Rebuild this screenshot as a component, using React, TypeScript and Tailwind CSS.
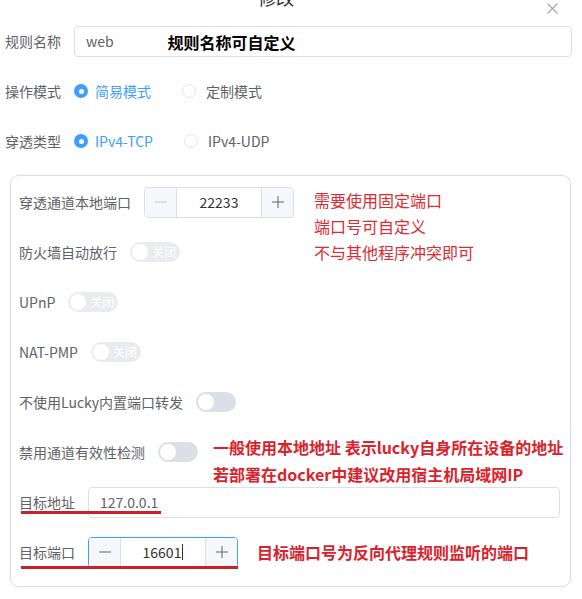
import React from "react";

function Radio({ checked }: { checked: boolean }) {
  return checked ? (
    <span className="w-[14px] h-[14px] rounded-full bg-[#409eff] flex items-center justify-center shrink-0">
      <span className="w-[5px] h-[5px] rounded-full bg-white" />
    </span>
  ) : (
    <span className="block w-[14px] h-[14px] rounded-full border border-[#e4e7ed] bg-white shrink-0" />
  );
}

function TextSwitch() {
  return (
    <span className="inline-flex items-center w-[50px] h-[20px] rounded-full bg-[#dcdfe6] opacity-60 shrink-0">
      <span className="ml-[2px] w-[16px] h-[16px] rounded-full bg-white" />
      <span className="ml-[4px] text-[12px] leading-none text-white">关闭</span>
    </span>
  );
}

function PlainSwitch() {
  return (
    <span className="inline-flex items-center w-[40px] h-[20px] rounded-full bg-[#dcdfe6] shrink-0">
      <span className="ml-[2px] w-[16px] h-[16px] rounded-full bg-white" />
    </span>
  );
}

function Minus({ color }: { color: string }) {
  return (
    <svg width="12" height="12" viewBox="0 0 12 12">
      <line x1="0" y1="6" x2="12" y2="6" stroke={color} strokeWidth="1" />
    </svg>
  );
}
function Plus({ color }: { color: string }) {
  return (
    <svg width="12" height="12" viewBox="0 0 12 12">
      <line x1="0" y1="6" x2="12" y2="6" stroke={color} strokeWidth="1" />
      <line x1="6" y1="0" x2="6" y2="12" stroke={color} strokeWidth="1" />
    </svg>
  );
}

function NumberInput({ value, focused }: { value: string; focused?: boolean }) {
  return (
    <div
      className={
        "flex h-[31px] w-[150px] rounded-[4px] border overflow-hidden shrink-0 " +
        (focused ? "border-[#409eff]" : "border-[#dcdfe6]")
      }
    >
      <div className="w-[32px] bg-[#f5f7fa] border-r border-[#dcdfe6] flex items-center justify-center">
        <Minus color={focused ? "#606266" : "#c0c4cc"} />
      </div>
      <div className="flex-1 flex items-center justify-center text-[14px] text-[#303133] bg-white">
        {value}
        {focused && <span className="w-px h-[16px] bg-[#303133] ml-[1px]" />}
      </div>
      <div className="w-[32px] bg-[#f5f7fa] border-l border-[#dcdfe6] flex items-center justify-center">
        <Plus color="#606266" />
      </div>
    </div>
  );
}

export default function App() {
  return (
    <div className="w-[582px] h-[599px] overflow-hidden bg-white font-['Noto_Sans_CJK_SC','Noto_Sans',sans-serif] text-[14px] text-[#606266] pl-[5px] pr-[10px]">
      {/* header */}
      <div className="h-[25px] flex items-start">
        <span className="ml-[253px] -mt-[15px] text-[18px] leading-[24px] text-[#303133]">修改</span>
        <span className="ml-auto mt-[3px] mr-[14px]">
          <svg width="11" height="11" viewBox="0 0 11 11">
            <line x1="0.5" y1="0.5" x2="10.5" y2="10.5" stroke="#a0a4ab" strokeWidth="1.1" />
            <line x1="10.5" y1="0.5" x2="0.5" y2="10.5" stroke="#a0a4ab" strokeWidth="1.1" />
          </svg>
        </span>
      </div>

      <div className="flex flex-col gap-[18px]">
        {/* 规则名称 */}
        <div className="h-[32px] flex items-center gap-[13px]">
          <span className="w-[56px] shrink-0">规则名称</span>
          <div className="flex-1 h-[31px] border border-[#dcdfe6] rounded-[4px] flex items-center pl-[11px]">
            <span className="text-[#606266]">web</span>
            <span className="ml-[54px] mt-[2px] text-[16px] font-bold text-black">规则名称可自定义</span>
          </div>
        </div>

        {/* 操作模式 */}
        <div className="h-[32px] flex items-center gap-[13px]">
          <span className="w-[56px] shrink-0">操作模式</span>
          <div className="flex items-center">
            <Radio checked />
            <span className="ml-[7px] text-[#409eff]">简易模式</span>
            <span className="ml-[31px] flex">
              <Radio checked={false} />
            </span>
            <span className="ml-[10px]">定制模式</span>
          </div>
        </div>

        {/* 穿透类型 */}
        <div className="h-[32px] flex items-center gap-[13px]">
          <span className="w-[56px] shrink-0">穿透类型</span>
          <div className="flex items-center">
            <Radio checked />
            <span className="ml-[7px] text-[#409eff]">IPv4-TCP</span>
            <span className="ml-[31px] flex">
              <Radio checked={false} />
            </span>
            <span className="ml-[10px]">IPv4-UDP</span>
          </div>
        </div>

        {/* card */}
        <div className="ml-[5px] mr-[1px] border border-[#dcdfe6] rounded-[9px] pl-[8px] pr-[10px] pt-[10px] pb-[18px] flex flex-col gap-[18px] shadow-[0_0_2px_rgba(0,0,0,0.08)]">
          <div className="h-[32px] flex items-center gap-[13px]">
            <span className="shrink-0">穿透通道本地端口</span>
            <NumberInput value="22233" />
            <div className="self-start mt-[1px] ml-[7px] text-[16px] leading-[26px] text-[#dc2b33] whitespace-nowrap">
              <div>需要使用固定端口</div>
              <div>端口号可自定义</div>
              <div>不与其他程序冲突即可</div>
            </div>
          </div>

          <div className="h-[32px] flex items-center gap-[13px]">
            <span className="shrink-0">防火墙自动放行</span>
            <TextSwitch />
          </div>

          <div className="h-[32px] flex items-center gap-[13px]">
            <span className="shrink-0">UPnP</span>
            <TextSwitch />
          </div>

          <div className="h-[32px] flex items-center gap-[13px]">
            <span className="shrink-0">NAT-PMP</span>
            <TextSwitch />
          </div>

          <div className="h-[32px] flex items-center gap-[13px]">
            <span className="shrink-0">不使用Lucky内置端口转发</span>
            <PlainSwitch />
          </div>

          <div className="h-[32px] flex items-center gap-[13px]">
            <span className="shrink-0">禁用通道有效性检测</span>
            <PlainSwitch />
            <div className="self-start -mt-[2px] ml-[2px] text-[16px] leading-[27px] font-bold text-[#d8232c] whitespace-nowrap">
              <div>一般使用本地地址 表示lucky自身所在设备的地址</div>
              <div>若部署在docker中建议改用宿主机局域网IP</div>
            </div>
          </div>

          <div className="h-[32px] flex items-center gap-[13px] relative">
            <span className="shrink-0">目标地址</span>
            <div className="flex-1 h-[31px] border border-[#dcdfe6] rounded-[4px] flex items-center pl-[11px] text-[#606266]">
              127.0.0.1
            </div>
            <span className="absolute left-[2px] top-[25px] w-[140px] h-[3px] bg-[#c9212b]" />
          </div>

          <div className="h-[32px] flex items-center gap-[13px] relative">
            <span className="shrink-0">目标端口</span>
            <NumberInput value="16601" focused />
            <span className="ml-[6px] text-[16px] font-bold text-[#d8232c] whitespace-nowrap">
              目标端口号为反向代理规则监听的端口
            </span>
            <span className="absolute left-[2px] top-[30px] w-[217px] h-[3px] bg-[#c9212b]" />
          </div>
        </div>
      </div>
    </div>
  );
}
